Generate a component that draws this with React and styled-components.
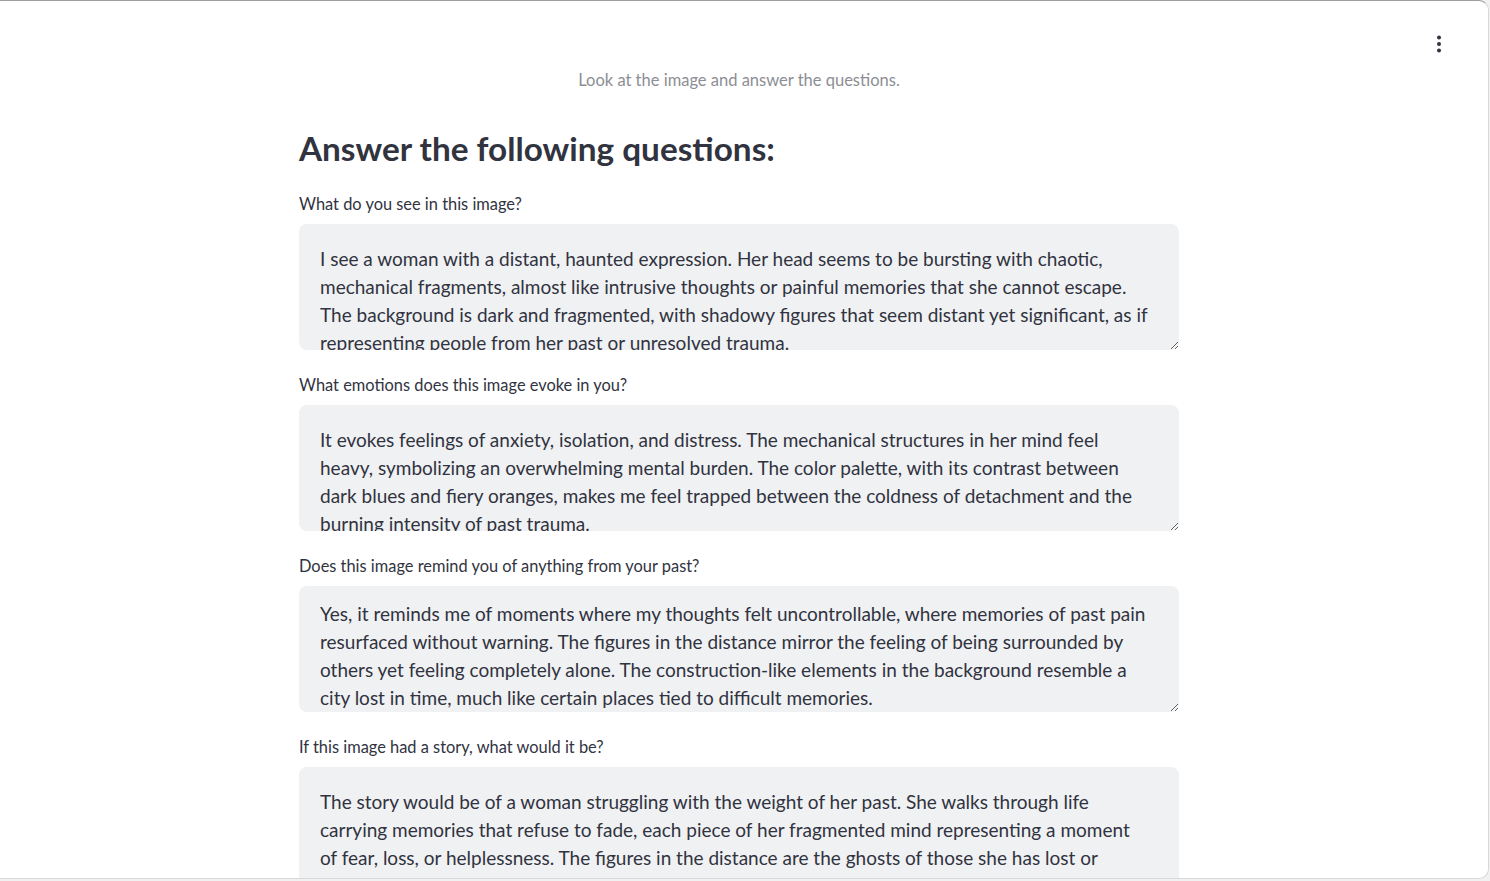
import styled, { createGlobalStyle } from "styled-components";
import * as React from "react";

const questions = [
  {
    label: "What do you see in this image?",
    answer:
      "I see a woman with a distant, haunted expression. Her head seems to be bursting with chaotic,\nmechanical fragments, almost like intrusive thoughts or painful memories that she cannot escape.\nThe background is dark and fragmented, with shadowy figures that seem distant yet significant, as if\nrepresenting people from her past or unresolved trauma.",
  },
  {
    label: "What emotions does this image evoke in you?",
    answer:
      "It evokes feelings of anxiety, isolation, and distress. The mechanical structures in her mind feel\nheavy, symbolizing an overwhelming mental burden. The color palette, with its contrast between\ndark blues and fiery oranges, makes me feel trapped between the coldness of detachment and the\nburning intensity of past trauma.",
  },
  {
    label: "Does this image remind you of anything from your past?",
    answer:
      "Yes, it reminds me of moments where my thoughts felt uncontrollable, where memories of past pain\nresurfaced without warning. The figures in the distance mirror the feeling of being surrounded by\nothers yet feeling completely alone. The construction-like elements in the background resemble a\ncity lost in time, much like certain places tied to difficult memories.",
    compact: true,
  },
  {
    label: "If this image had a story, what would it be?",
    answer:
      "The story would be of a woman struggling with the weight of her past. She walks through life\ncarrying memories that refuse to fade, each piece of her fragmented mind representing a moment\nof fear, loss, or helplessness. The figures in the distance are the ghosts of those she has lost or\nthe versions of herself she left behind.",
  },
];

const GlobalStyle = createGlobalStyle`
  html, body {
    margin: 0;
    padding: 0;
    background: #f1f1f1;
    font-family: Lato, "Open Sans", sans-serif;
    color: #31333f;
  }
`;

const MenuIcon = () => (
  <svg width="6" height="18" viewBox="0 0 6 18">
    <circle cx="3" cy="2.5" r="2" fill="#31333f" />
    <circle cx="3" cy="9" r="2" fill="#31333f" />
    <circle cx="3" cy="15.5" r="2" fill="#31333f" />
  </svg>
);

const App = () => {
  return (
    <>
      <GlobalStyle />
      <Frame>
        <MenuButton>
          <MenuIcon />
        </MenuButton>
        <Main>
          <Caption>Look at the image and answer the questions.</Caption>
          <Heading>Answer the following questions:</Heading>
          {questions.map((q) => (
            <Field key={q.label}>
              <Label>{q.label}</Label>
              <Answer value={q.answer} readOnly $compact={q.compact} />
            </Field>
          ))}
        </Main>
      </Frame>
    </>
  );
};

const Frame = styled.div`
  position: relative;
  box-sizing: border-box;
  width: 1489px;
  height: 879px;
  background: #ffffff;
  border-top: 1px solid #9e9e9e;
  border-right: 1px solid #d8d8d8;
  border-bottom: 1px solid #d8d8d8;
  border-radius: 0 10px 10px 0;
  overflow: hidden;
  padding-right: 10px;
`;

const MenuButton = styled.div`
  position: absolute;
  top: 33px;
  right: 43px;
  width: 12px;
  height: 20px;
  display: flex;
  align-items: center;
  justify-content: center;
`;

const Main = styled.div`
  width: 880px;
  margin: 0 auto;
  padding-top: 67px;
  display: flex;
  flex-direction: column;
`;

const Caption = styled.div`
  font-size: 16.5px;
  line-height: 24px;
  color: #8c8e94;
  text-align: center;
`;

const Heading = styled.h2`
  margin: 37px 0 26px;
  font-size: 33.3px;
  line-height: 38px;
  font-weight: 700;
  color: #31333f;
`;

const Field = styled.div`
  display: flex;
  flex-direction: column;
  margin-bottom: 24px;
`;

const Label = styled.label`
  font-size: 16.4px;
  line-height: 22px;
  margin-bottom: 9px;
  color: #31333f;
`;

const Answer = styled.textarea`
  box-sizing: border-box;
  width: 100%;
  height: 126px;
  margin: 0;
  border: none;
  outline: none;
  border-radius: 8px;
  background: #f0f1f3;
  padding: ${({ $compact }) => ($compact ? "14px" : "21px")} 21px 14px;
  font-family: Lato, "Open Sans", sans-serif;
  font-size: 19px;
  line-height: 28px;
  color: #31333f;
  resize: vertical;
  overflow: hidden;
  white-space: pre;
`;

export default App;
